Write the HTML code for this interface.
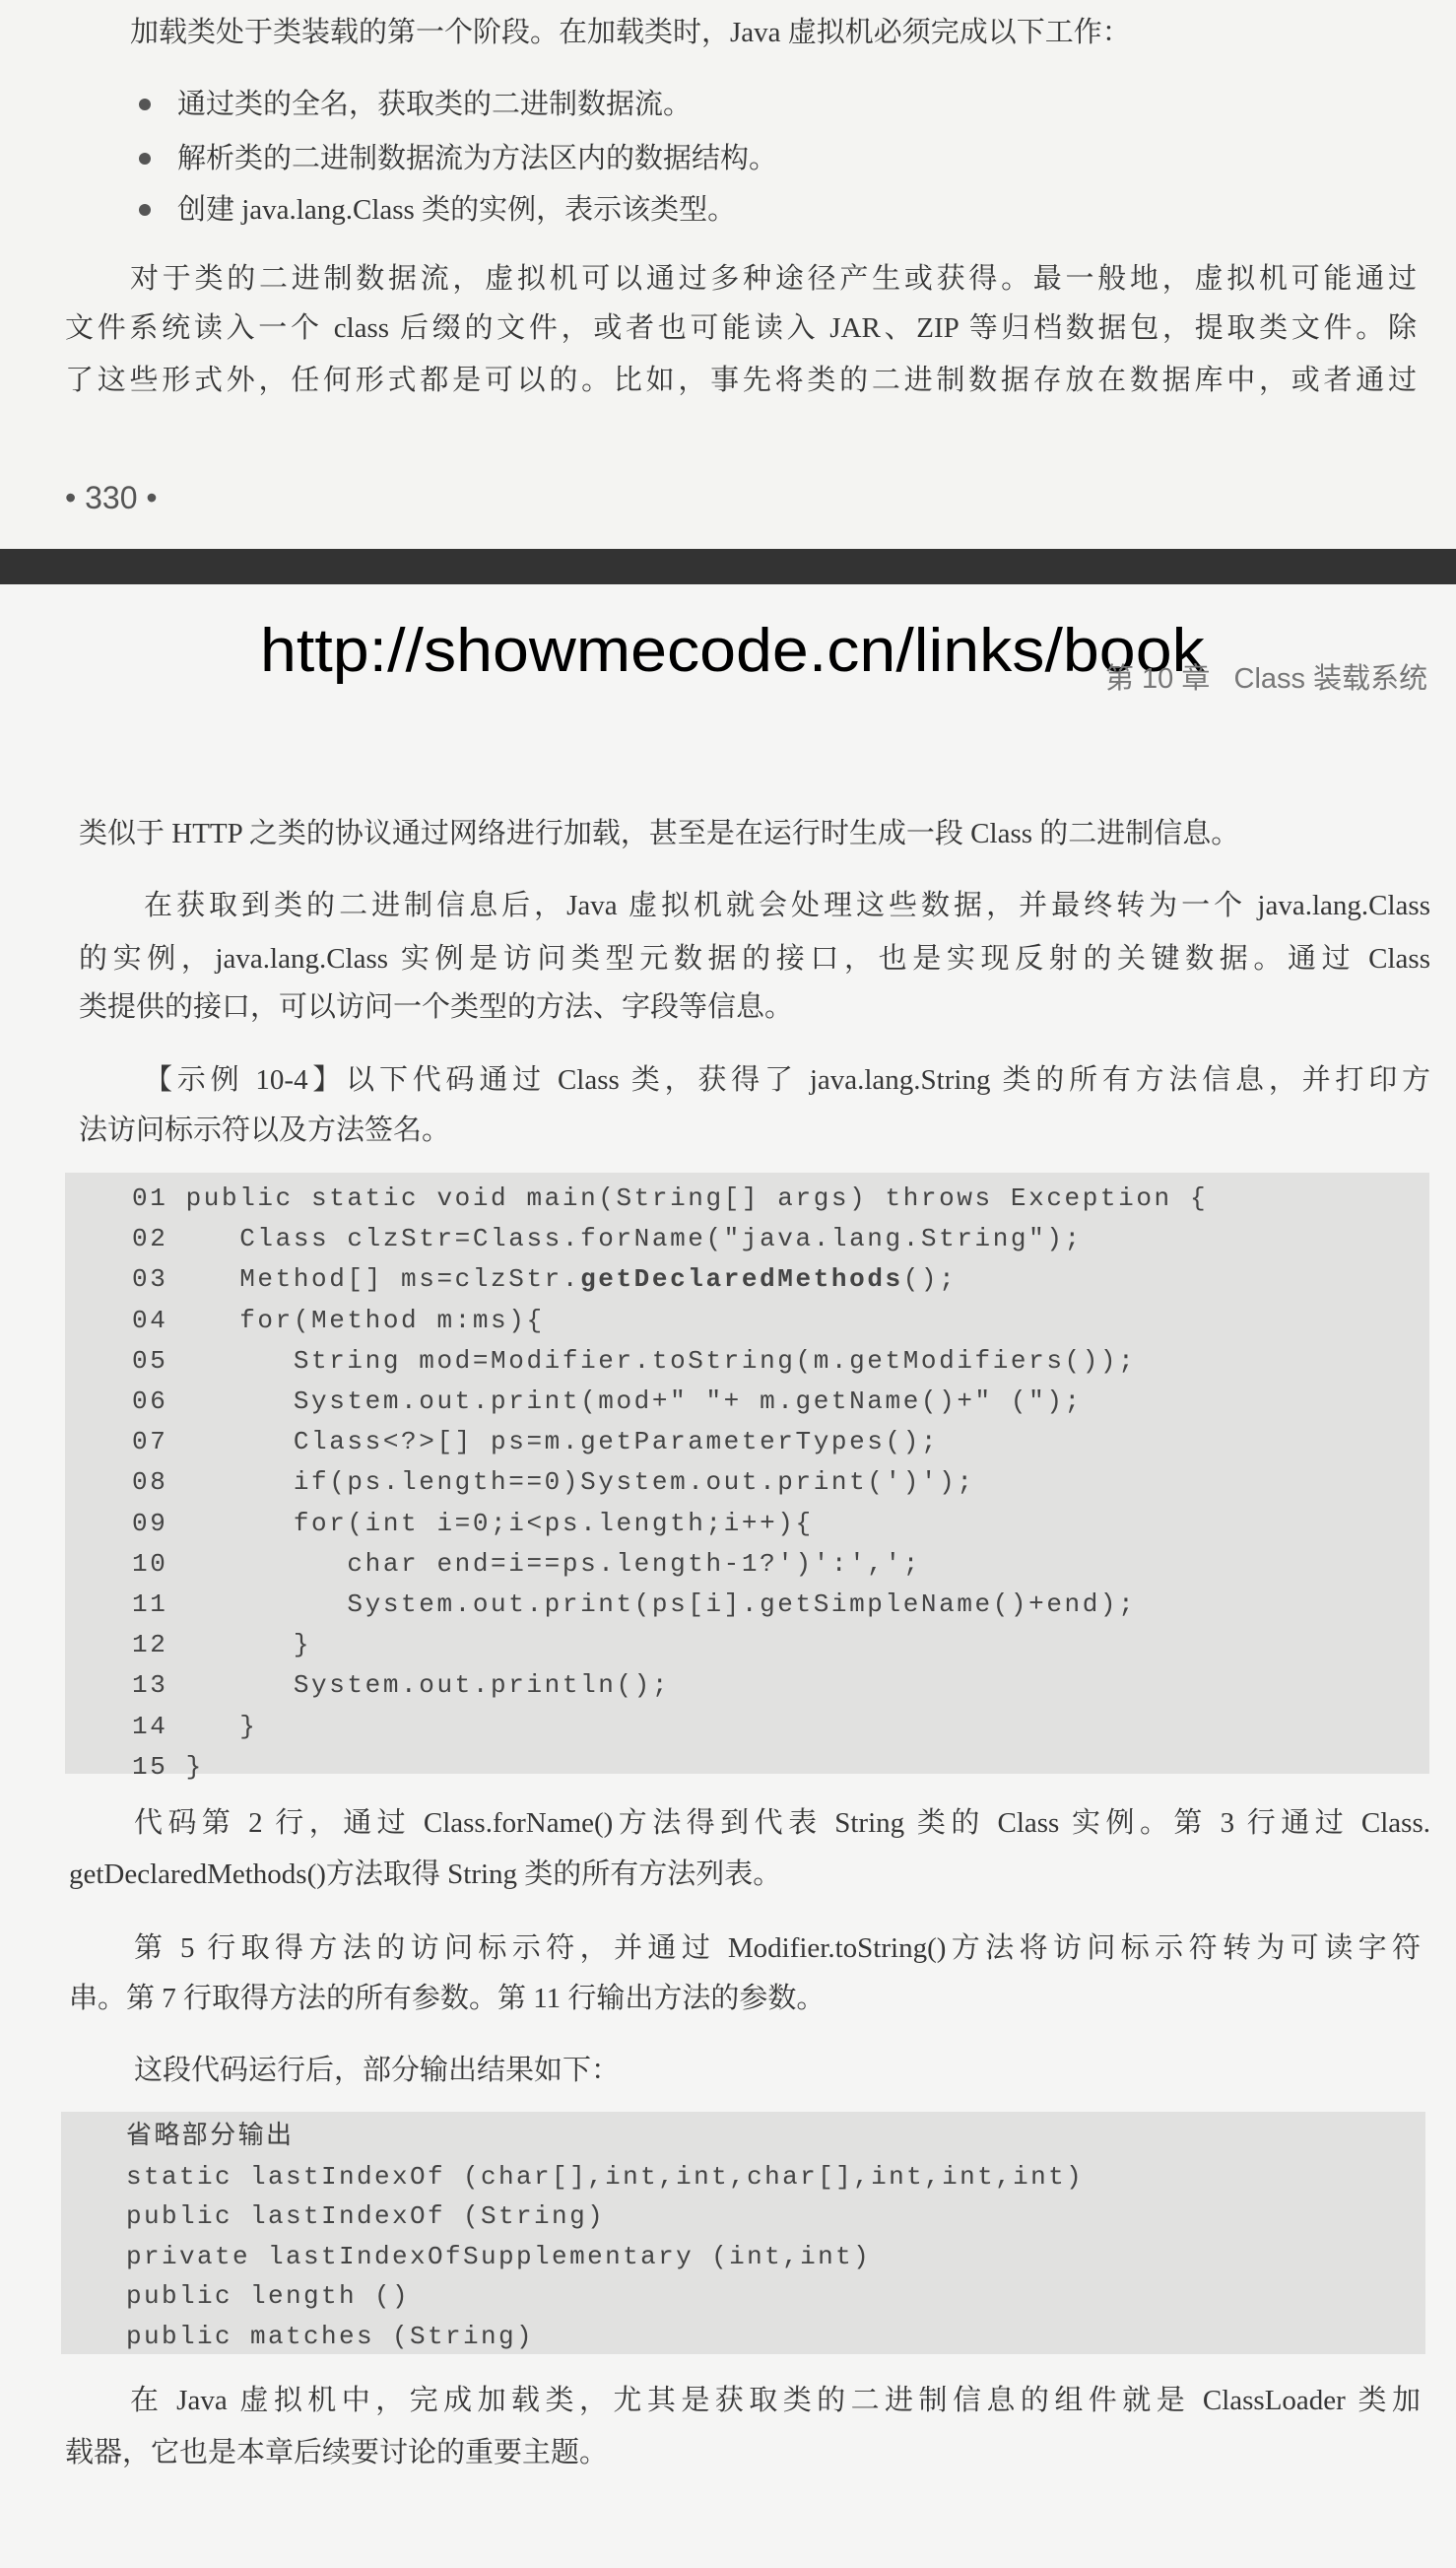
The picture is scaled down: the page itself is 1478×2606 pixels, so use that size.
<!DOCTYPE html>
<html><head><meta charset="utf-8">
<style>
*{margin:0;padding:0}
body{width:1478px;height:2606px;background:#f4f4f2;position:relative;overflow:hidden;font-family:"Liberation Serif","Noto Serif CJK SC",serif;color:#363636}
.l{position:absolute;font-size:29px;line-height:40px;white-space:nowrap}
.j{text-align:justify;text-align-last:justify;white-space:normal}
.code{position:absolute;background:#e1e1e0}
.m{position:absolute;font-family:"Liberation Mono","Noto Sans CJK SC",monospace;font-size:26px;line-height:36px;letter-spacing:2.6px;white-space:pre;color:#444}
.bar{position:absolute;left:0;top:557px;width:1478px;height:36px;background:#333}
.wh{position:absolute;left:0;top:593px;width:1478px;height:2013px;background:#f5f5f4}
.dot{position:absolute;left:141px;width:12px;height:12px;border-radius:50%;background:#555}
</style></head><body>
<div class="l" style="left:132px;top:13px">加载类处于类装载的第一个阶段。在加载类时，Java 虚拟机必须完成以下工作：</div>
<div class="dot" style="top:100px"></div>
<div class="l" style="left:180px;top:86px">通过类的全名，获取类的二进制数据流。</div>
<div class="dot" style="top:155px"></div>
<div class="l" style="left:180px;top:141px">解析类的二进制数据流为方法区内的数据结构。</div>
<div class="dot" style="top:207px"></div>
<div class="l" style="left:180px;top:193px">创建 java.lang.Class 类的实例，表示该类型。</div>
<div class="l j" style="left:132px;width:1306px;top:263px">对于类的二进制数据流，虚拟机可以通过多种途径产生或获得。最一般地，虚拟机可能通过</div>
<div class="l j" style="left:66px;width:1372px;top:313px">文件系统读入一个 class 后缀的文件，或者也可能读入 JAR、ZIP 等归档数据包，提取类文件。除</div>
<div class="l j" style="left:66px;width:1372px;top:366px">了这些形式外，任何形式都是可以的。比如，事先将类的二进制数据存放在数据库中，或者通过</div>
<div class="l" style="left:66px;top:485px;font-family:'Liberation Sans',sans-serif;font-size:32px;color:#555">• 330 •</div>
<div class="bar"></div>
<div class="wh"></div>
<div class="l" style="left:264px;top:626px;font-family:'Liberation Sans',sans-serif;font-size:62px;line-height:70px;color:#000;transform:scaleX(1.07);transform-origin:left">http://showmecode.cn/links/book</div>
<div class="l" style="left:1122px;top:669px;font-family:'Liberation Sans','Noto Sans CJK SC',sans-serif;font-size:29px;color:#777">第 10 章&nbsp;&nbsp;&nbsp;Class 装载系统</div>
<div class="l" style="left:80px;top:826px">类似于 HTTP 之类的协议通过网络进行加载，甚至是在运行时生成一段 Class 的二进制信息。</div>
<div class="l j" style="left:146px;width:1306px;top:899px">在获取到类的二进制信息后，Java 虚拟机就会处理这些数据，并最终转为一个 java.lang.Class</div>
<div class="l j" style="left:80px;width:1372px;top:953px">的实例，java.lang.Class 实例是访问类型元数据的接口，也是实现反射的关键数据。通过 Class</div>
<div class="l" style="left:80px;top:1002px">类提供的接口，可以访问一个类型的方法、字段等信息。</div>
<div class="l j" style="left:146px;width:1306px;top:1076px">【示例 10-4】以下代码通过 Class 类，获得了 java.lang.String 类的所有方法信息，并打印方</div>
<div class="l" style="left:80px;top:1127px">法访问标示符以及方法签名。</div>
<div class="code" style="left:66px;top:1190px;width:1385px;height:610px"></div>
<div class="m" style="left:134px;top:1196px;line-height:41.2px">01 public static void main(String[] args) throws Exception {
02    Class clzStr=Class.forName("java.lang.String");
03    Method[] ms=clzStr.<b>getDeclaredMethods</b>();
04    for(Method m:ms){
05       String mod=Modifier.toString(m.getModifiers());
06       System.out.print(mod+" "+ m.getName()+" (");
07       Class&lt;?&gt;[] ps=m.getParameterTypes();
08       if(ps.length==0)System.out.print(')');
09       for(int i=0;i&lt;ps.length;i++){
10          char end=i==ps.length-1?')':',';
11          System.out.print(ps[i].getSimpleName()+end);
12       }
13       System.out.println();
14    }
15 }</div>
<div class="l j" style="left:136px;width:1316px;top:1830px">代码第 2 行，通过 Class.forName()方法得到代表 String 类的 Class 实例。第 3 行通过 Class.</div>
<div class="l" style="left:70px;top:1882px">getDeclaredMethods()方法取得 String 类的所有方法列表。</div>
<div class="l j" style="left:136px;width:1306px;top:1957px">第 5 行取得方法的访问标示符，并通过 Modifier.toString()方法将访问标示符转为可读字符</div>
<div class="l" style="left:70px;top:2008px">串。第 7 行取得方法的所有参数。第 11 行输出方法的参数。</div>
<div class="l" style="left:136px;top:2081px">这段代码运行后，部分输出结果如下：</div>
<div class="code" style="left:62px;top:2143px;width:1385px;height:246px"></div>
<div class="m" style="left:128px;top:2148px;line-height:40.5px;letter-spacing:2.4px">省略部分输出
static lastIndexOf (char[],int,int,char[],int,int,int)
public lastIndexOf (String)
private lastIndexOfSupplementary (int,int)
public length ()
public matches (String)</div>
<div class="l j" style="left:132px;width:1310px;top:2416px">在 Java 虚拟机中，完成加载类，尤其是获取类的二进制信息的组件就是 ClassLoader 类加</div>
<div class="l" style="left:66px;top:2469px">载器，它也是本章后续要讨论的重要主题。</div>
</body></html>
